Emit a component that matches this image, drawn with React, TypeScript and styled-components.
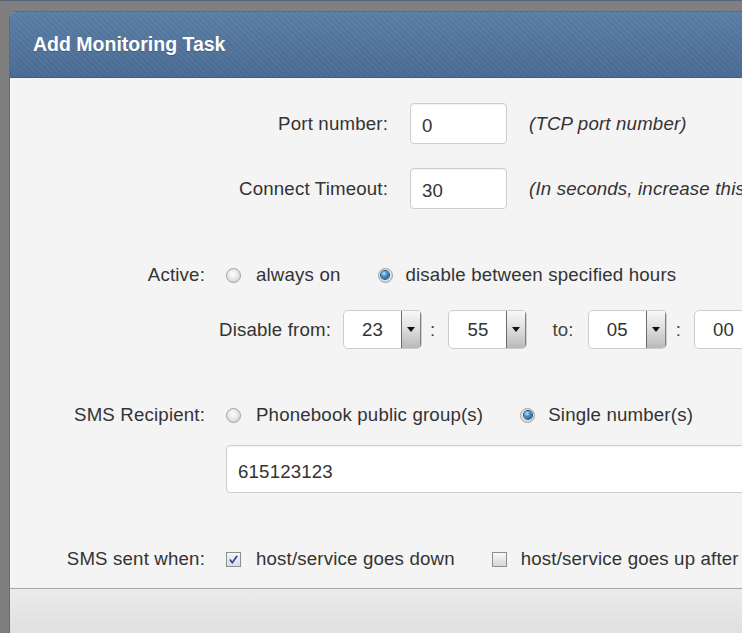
import React from 'react';
import styled, { createGlobalStyle } from 'styled-components';

const Global = createGlobalStyle`
  html, body { margin: 0; padding: 0; background: #7f7f7f; overflow: hidden; }
  body { font-family: "Liberation Sans", Arial, sans-serif; }
  * { box-sizing: border-box; }
`;

const Backdrop = styled.div`
  height: 633px;
  border-top: 1px solid #56677b;
  padding: 10px 0 0 9px;
  background: #7f7f7f;
  overflow: hidden;
`;

const Modal = styled.div`
  width: 1000px;
  border: 1px solid #5d6b7a;
  border-bottom: none;
  border-radius: 6px 6px 0 0;
  overflow: hidden;
  background: #f4f4f4;
`;

const Header = styled.div`
  height: 66px;
  display: flex;
  align-items: center;
  padding: 0 0 0 23px;
  border-bottom: 1px solid #3e5c80;
  background:
    repeating-linear-gradient(45deg, rgba(255,255,255,0.025) 0 2px, rgba(0,0,0,0.025) 2px 4px),
    linear-gradient(#5b7fa7, #4a6c93);
`;

const Title = styled.h3`
  margin: 0;
  font-size: 19.5px;
  font-weight: bold;
  color: #ffffff;
  text-shadow: 0 1px 1px rgba(0,0,0,0.2);
`;

const FormBody = styled.div`
  height: 510px;
  padding: 25px 0 0 0;
  display: flex;
  flex-direction: column;
  color: #333;
  font-size: 18.67px;
  letter-spacing: 0.17px;
`;

const Row = styled.div<{ $mt?: number; $h: number; $gap: number; $indent?: number }>`
  display: flex;
  align-items: center;
  margin-top: ${p => p.$mt ?? 0}px;
  height: ${p => p.$h}px;
  gap: ${p => p.$gap}px;
  padding-left: ${p => p.$indent ?? 0}px;
  flex: none;
  white-space: nowrap;
`;

const Label = styled.label<{ $w?: number; $mr?: number }>`
  ${p => (p.$w ? `width: ${p.$w}px; text-align: right;` : '')}
  margin-right: ${p => p.$mr ?? 0}px;
  flex: none;
`;

const TextInput = styled.input<{ $w: number; $h: number }>`
  width: ${p => p.$w}px;
  height: ${p => p.$h}px;
  flex: none;
  border: 1px solid #cdcdcd;
  border-radius: 4px;
  background: #fff;
  padding: 5px 11px 0;
  font-family: "Liberation Sans", Arial, sans-serif;
  font-size: 18.67px;
  letter-spacing: 0.17px;
  color: #333;
  box-shadow: inset 0 1px 1px rgba(0,0,0,0.05);
  outline: none;
`;

const Hint = styled.span`
  font-style: italic;
  color: #333;
`;

const SelectBox = styled.div`
  display: flex;
  width: 79px;
  height: 39px;
  flex: none;
  border: 1px solid #cdcdcd;
  border-radius: 5px;
  background: #fff;
  overflow: hidden;
`;

const SelectValue = styled.span`
  flex: 1;
  display: flex;
  align-items: center;
  justify-content: center;
`;

const SelectArrow = styled.span`
  width: 20px;
  flex: none;
  display: flex;
  align-items: center;
  justify-content: center;
  border-left: 1px solid #6a6a6a;
  border-right: 1px solid #808080;
  background: linear-gradient(#f8f8f8, #e0e0e0 45%, #b9b9b9);
  &::before {
    content: '';
    border-left: 4.5px solid transparent;
    border-right: 4.5px solid transparent;
    border-top: 5px solid #111;
  }
`;

const Sep = styled.span<{ $l: number; $r: number }>`
  margin: 0 ${p => p.$r}px 0 ${p => p.$l}px;
  color: #444;
`;

const Options = styled.div`
  display: flex;
  align-items: center;
  gap: 37px;
`;

const Option = styled.span<{ $gap?: number }>`
  display: inline-flex;
  align-items: center;
  gap: ${p => p.$gap ?? 15}px;
`;

const RadioCircle = styled.span`
  width: 15px;
  height: 15px;
  flex: none;
  border-radius: 50%;
  border: 1px solid #a0a0a0;
  background: radial-gradient(circle at 45% 40%, #ffffff 0%, #e8e8e8 45%, #c9c9c9 100%);
  display: flex;
  align-items: center;
  justify-content: center;
`;

const RadioDot = styled.span`
  width: 8px;
  height: 8px;
  border-radius: 50%;
  background: radial-gradient(circle at 38% 32%, #bfe4fa 0%, #3f8fcc 40%, #124a7c 100%);
  box-shadow: 0 0 0 1px #234e74;
`;

const CheckBox = styled.span<{ $on?: boolean }>`
  width: 15px;
  height: 15px;
  flex: none;
  border: 1px solid #8e8e8e;
  background: ${p => (p.$on ? 'linear-gradient(#f3f5fb, #d8dce6)' : 'linear-gradient(#f9f9f9, #d6d6d6)')};
  display: flex;
  align-items: center;
  justify-content: center;
`;

const Footer = styled.div`
  height: 60px;
  border-top: 1px solid #a6a6a6;
  background: linear-gradient(#ebebeb, #dcdcdc);
`;

const Radio = ({ checked }: { checked?: boolean }) => (
  <RadioCircle>{checked && <RadioDot />}</RadioCircle>
);

const Check = ({ checked }: { checked?: boolean }) => (
  <CheckBox $on={checked}>
    {checked && (
      <svg width="11" height="11" viewBox="0 0 11 11">
        <path d="M1.8 5.6 L4.3 8.6 L9.2 1.8" fill="none" stroke="#2d3f9c" strokeWidth="1.6" />
      </svg>
    )}
  </CheckBox>
);

const Select = ({ value }: { value: string }) => (
  <SelectBox>
    <SelectValue>{value}</SelectValue>
    <SelectArrow />
  </SelectBox>
);

export default function App() {
  return (
    <>
      <Global />
      <Backdrop>
        <Modal>
          <Header>
            <Title>Add Monitoring Task</Title>
          </Header>
          <FormBody>
            <Row $h={41} $gap={22}>
              <Label $w={378}>Port number:</Label>
              <TextInput $w={97} $h={41} defaultValue="0" />
              <Hint>(TCP port number)</Hint>
            </Row>
            <Row $mt={24} $h={41} $gap={22}>
              <Label $w={378}>Connect Timeout:</Label>
              <TextInput $w={97} $h={41} defaultValue="30" />
              <Hint>(In seconds, increase this if the host is slow to respond)</Hint>
            </Row>
            <Row $mt={51} $h={30} $gap={21}>
              <Label $w={195}>Active:</Label>
              <Options>
                <Option><Radio />always on</Option>
                <Option $gap={13}><Radio checked />disable between specified hours</Option>
              </Options>
            </Row>
            <Row $mt={20} $h={39} $gap={0} $indent={209}>
              <Label $mr={12}>Disable from:</Label>
              <Select value="23" />
              <Sep $l={8} $r={13}>:</Sep>
              <Select value="55" />
              <Sep $l={25} $r={14}>to:</Sep>
              <Select value="05" />
              <Sep $l={9} $r={13}>:</Sep>
              <Select value="00" />
            </Row>
            <Row $mt={51} $h={30} $gap={21}>
              <Label $w={195}>SMS Recipient:</Label>
              <Options>
                <Option><Radio />Phonebook public group(s)</Option>
                <Option $gap={13}><Radio checked />Single number(s)</Option>
              </Options>
            </Row>
            <Row $mt={15} $h={48} $gap={0} $indent={216}>
              <TextInput $w={640} $h={48} defaultValue="615123123" />
            </Row>
            <Row $mt={51} $h={30} $gap={21}>
              <Label $w={195}>SMS sent when:</Label>
              <Options>
                <Option><Check checked />host/service goes down</Option>
                <Option $gap={14}><Check />host/service goes up after being down</Option>
              </Options>
            </Row>
          </FormBody>
          <Footer />
        </Modal>
      </Backdrop>
    </>
  );
}
